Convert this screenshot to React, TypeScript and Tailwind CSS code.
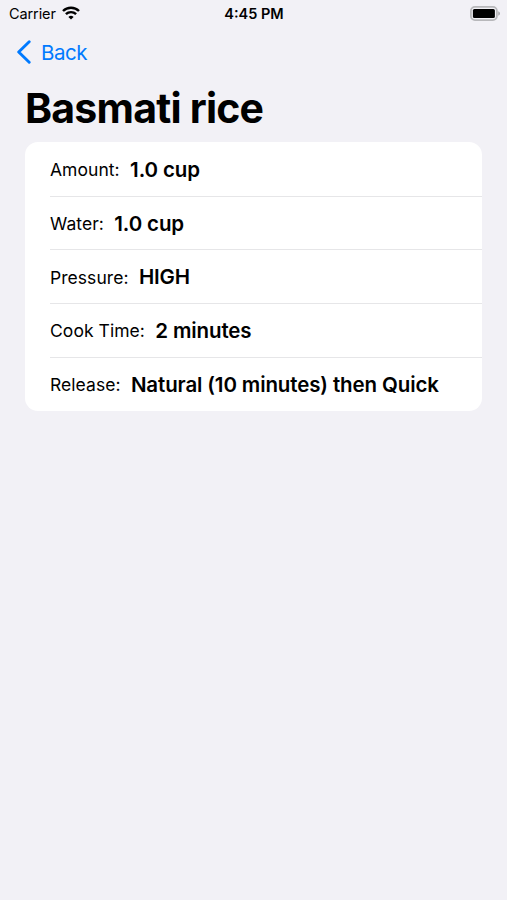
const rows = [
  { label: "Amount:", value: "1.0 cup" },
  { label: "Water:", value: "1.0 cup" },
  { label: "Pressure:", value: "HIGH" },
  { label: "Cook Time:", value: "2 minutes" },
  { label: "Release:", value: "Natural (10 minutes) then Quick" }
];

export default function App() {
  return (
    <div className="flex h-[900px] w-[507px] flex-col bg-[#f2f1f6] font-['Inter',sans-serif] text-black">
      <StatusBar />
      <NavBar />
      <h1 className="pt-[6px] pl-[25px] text-[41px] leading-[48px] font-bold tracking-[-0.78px]">Basmati rice</h1>
      <main className="mx-[25px] mt-[10.4px] overflow-hidden rounded-[13px] bg-white pt-[0.6px] pl-[25px]">
        {rows.map((row) => (
          <Row key={row.label} label={row.label} value={row.value} />
        ))}
      </main>
    </div>
  );
}

function StatusBar() {
  return (
    <header className="grid h-[27px] grid-cols-3 items-center pr-[7px] pl-[9px]">
      <div className="flex items-center gap-[6px] text-[14.5px] tracking-[-0.1px]">
        <span>Carrier</span>
        <WifiIcon />
      </div>
      <span className="pr-[1px] text-center text-[14.5px] font-semibold">4:45 PM</span>
      <div className="flex justify-end">
        <BatteryIcon />
      </div>
    </header>
  );
}

function NavBar() {
  return (
    <nav className="flex h-[51px] items-center pl-[16px] text-[#007aff]">
      <button type="button" className="flex items-center gap-[10px] text-[20.5px] tracking-[-0.45px]">
        <svg width="15" height="24" viewBox="0 0 15 24" fill="none" className="mb-[2px]" aria-hidden>
          <path d="M13.2 1.7 2.7 12l10.5 10.3" stroke="currentColor" strokeWidth="2.9" strokeLinecap="round" strokeLinejoin="round" />
        </svg>
        <span className="pt-[1px]">Back</span>
      </button>
    </nav>
  );
}

function Row({ label, value }: { label: string; value: string }) {
  return (
    <div className="flex h-[53.7px] items-center gap-[10.4px] border-b border-[#e6e6e8] pt-[2px] whitespace-nowrap last:border-b-0">
      <span className="text-[17.5px] tracking-[0.05px]">{label}</span>
      <span className="text-[20.5px] font-semibold tracking-[-0.12px]">{value}</span>
    </div>
  );
}

function WifiIcon() {
  return (
    <svg width="18" height="14" viewBox="0 0 18 14" fill="none" stroke="currentColor" strokeWidth="2.4" className="mb-[2px]" aria-hidden>
      <path d="M1 5a11.3 11.3 0 0 1 16 0" />
      <path d="M3.9 8.2a7.2 7.2 0 0 1 10.2 0" />
      <path d="M6.4 11a3.7 3.7 0 0 1 5.2 0L9 13.6Z" fill="currentColor" stroke="none" />
    </svg>
  );
}

function BatteryIcon() {
  return (
    <svg width="30" height="15" viewBox="0 0 30 15" aria-hidden>
      <rect x="0.9" y="0.9" width="26" height="13.2" rx="4" fill="none" stroke="#b8b8bb" strokeWidth="1.8" />
      <rect x="2.9" y="2.9" width="22" height="9.2" rx="1.5" />
      <path d="M28.3 5.2v4.6c1.1-.5 1.6-1.4 1.6-2.3s-.5-1.8-1.6-2.3Z" fill="#a0a0a4" />
    </svg>
  );
}
